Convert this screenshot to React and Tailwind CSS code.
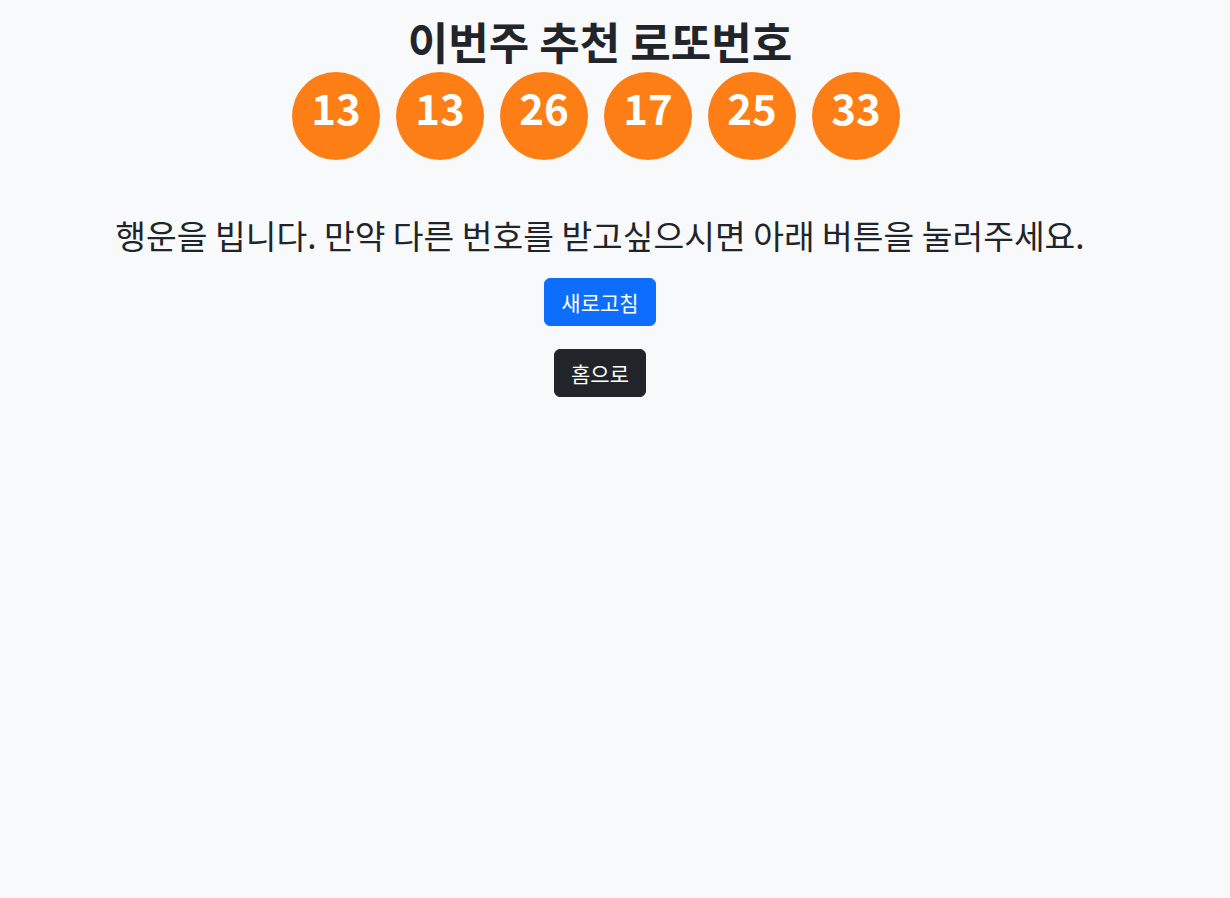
const NUMBERS = [13, 13, 26, 17, 25, 33];

export default function App() {
  return (
    <div className="min-h-screen bg-[#f8f9fa] text-[#212529] font-['Noto_Sans_CJK_KR','Noto_Sans',sans-serif]">
      <div className="flex flex-col items-center pr-[30px] pt-[15px] text-center">
        <h1 className="text-[44px] font-bold leading-[53px]">이번주 추천 로또번호</h1>
        <div className="mt-[4px] mr-[8px] flex gap-4">
          {NUMBERS.map((n, i) => (
            <div
              key={i}
              className="flex h-[88px] w-[88px] justify-center rounded-full bg-[#fd7e14] text-[42px] font-bold leading-[69px] text-white"
            >
              {n}
            </div>
          ))}
        </div>
        <p className="mt-[55px] text-[33.4px] leading-[40px]">
          행운을 빕니다. 만약 다른 번호를 받고싶으시면 아래 버튼을 눌러주세요.
        </p>
        <button className="mt-[23px] rounded-md border border-[#0d6efd] bg-[#0d6efd] px-4 py-2 text-[21px] leading-[30px] text-white">
          새로고침
        </button>
        <button className="mt-[23px] rounded-md border border-[#212529] bg-[#212529] px-4 py-2 text-[21px] leading-[30px] text-white">
          홈으로
        </button>
      </div>
    </div>
  );
}
